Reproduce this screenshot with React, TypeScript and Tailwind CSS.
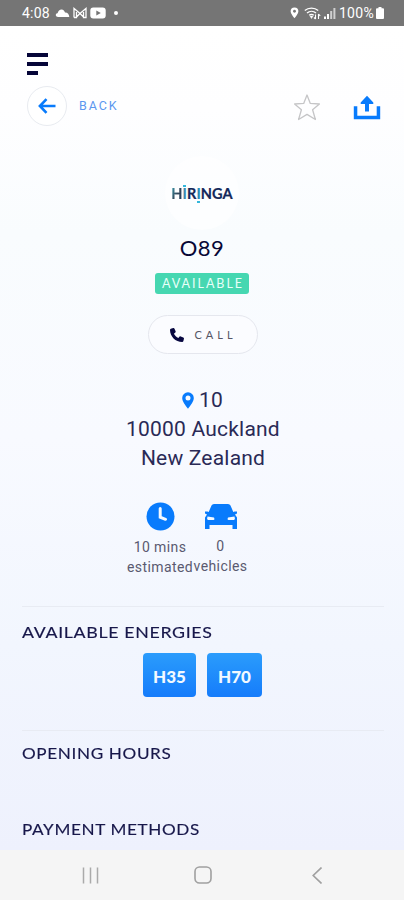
import React from "react";

function StatusBar() {
  return (
    <header className="flex h-[26px] shrink-0 items-center bg-[#757575] pl-[22px] pr-[20px] font-['Roboto',sans-serif] text-white">
      <span className="w-[33px] text-[14px] leading-[26px] tracking-[0.2px]">4:08</span>
      <svg className="h-[10px] w-[15px]" viewBox="0 0 15 10" fill="#fff">
        <path d="M3.2 9C1.4 9 .6 8 .8 6.8 1 5.700 2 5.300 2.600 5.300 3 2.500 5 1.300 6.600 1.400 8.400 1.500 9.600 2.800 10 4.500 12.500 4.300 14.200 6.200 14.300 9Z" />
      </svg>
      <svg className="ml-[3px] h-[12px] w-[14px]" viewBox="0 0 14 12" fill="none" stroke="#fff" strokeWidth="1.300">
        <path d="M1 10.500V1.500L7 6.500 13 1.500V10.500H10.500V5M3.500 5V10.500H1M3.500 10 7 6.500 10.500 10" />
      </svg>
      <svg className="ml-[3px] h-[12px] w-[16px]" viewBox="0 0 16 12">
        <rect x="0.300" y="0.500" width="15.400" height="11" rx="3" fill="#fff" />
        <path d="M6.300 3.500 10.800 6 6.300 8.500Z" fill="#757575" />
      </svg>
      <span className="ml-[8px] h-[4px] w-[4px] rounded-full bg-white" />
      <div className="ml-auto flex items-center">
        <svg className="h-[12px] w-[9px]" viewBox="0 0 9 13">
          <path d="M4.500 .5A4.200 4.200 0 0 0 .3 4.700C.3 7.500 4.500 12.300 4.500 12.300S8.700 7.500 8.700 4.700A4.200 4.200 0 0 0 4.500 .5Z" fill="#fff" />
          <circle cx="4.500" cy="4.600" r="1.500" fill="#757575" />
        </svg>
        <svg className="ml-[5px] h-[13px] w-[17px]" viewBox="0 0 17 13" fill="none" stroke="#fff" strokeWidth="1.300">
          <path d="M.8 3.600C4.500 .3 10.500 .3 14.200 3.600M3 6C5.600 3.700 9.400 3.700 12 6M5.200 8.300C6.600 7.200 8.300 7.200 9.800 8.300" />
          <path d="M6 9H9L7.500 11.500Z" fill="#fff" strokeWidth="0.500" />
          <path d="M11.500 12V7.500M10 10.500 11.500 12M14.500 7V12M14.500 7 16.200 8.900" strokeWidth="1.100" />
        </svg>
        <svg className="ml-[3px] h-[11px] w-[12px]" viewBox="0 0 12 11" fill="#fff">
          <path d="M0 8.500H2V11H0ZM3 6H5V11H3Z" />
          <path d="M6.200 3H8.200V11H6.200ZM9.400 0H11.400V11H9.400Z" opacity="0.650" />
        </svg>
        <span className="ml-[3px] text-[14px] leading-[26px] tracking-[0.300px]">100%</span>
        <svg className="ml-[2px] h-[12px] w-[8px]" viewBox="0 0 8 12" fill="#fff">
          <path d="M2.500 0H5.500V1.200H7Q8 1.200 8 2.200V11Q8 12 7 12H1Q0 12 0 11V2.200Q0 1.200 1 1.200H2.500Z" />
        </svg>
      </div>
    </header>
  );
}

function Toolbar() {
  return (
    <div className="pt-[27px]">
      <div className="ml-[27px] flex h-[33px] flex-col gap-[5px]">
        <span className="h-[4px] w-[21px] bg-[#050538]" />
        <span className="h-[4px] w-[21px] bg-[#050538]" />
        <span className="h-[4px] w-[11px] bg-[#050538]" />
      </div>
      <div className="flex h-[40px] items-center pl-[27px] pr-[23px]">
        <button className="flex h-[40px] w-[40px] items-center justify-center rounded-full border border-[#e8ebf0] bg-white">
          <svg className="h-[16px] w-[18px]" viewBox="0 0 18 16" fill="none" stroke="#087bfc" strokeWidth="2.600">
            <path d="M17.500 8H2M8.500 1.200 1.900 8 8.500 14.800" />
          </svg>
        </button>
        <span className="ml-[12px] font-['Roboto',sans-serif] text-[12.500px] tracking-[1.900px] text-[#5b97ef]">BACK</span>
        <svg className="mt-[1px] ml-auto h-[28px] w-[28px]" viewBox="0 0 28 28" fill="none" stroke="#c5c5c7" strokeWidth="1.300" strokeLinejoin="round">
          <path d="M14 2 17.300 10.400 26.400 11 19.600 16.800 22.400 26.500 14 21.400 5.600 26.500 8.400 16.800 1.600 11 10.700 10.400Z" />
        </svg>
        <svg className="mt-[2px] ml-[32px] h-[25px] w-[28px]" viewBox="0 0 28 25" fill="#087bfc">
          <path d="M.8 11.300H4.300V20.700H23.700V11.300H27.200V24.200H.8Z" />
          <path d="M14 .7 20.300 7.500V9H16V16.500H12V9H7.700V7.500Z" />
        </svg>
      </div>
    </div>
  );
}

function BrandLogo() {
  return (
    <div className="mt-[30px] flex h-[74px] w-[74px] items-center justify-center self-center rounded-full bg-white/60">
      <div className="relative mt-[2px] flex font-['Lato',sans-serif] text-[14.500px] leading-[20px] font-bold tracking-[0.100px] whitespace-nowrap text-[#13285a] [-webkit-text-stroke:0.200px]">
        <span className="bg-[linear-gradient(120deg,#3faec0,#33475b_50%,#133456)] bg-clip-text text-transparent">H</span>
        <span className="text-[#3689ae]">I</span>
        <span>R</span>
        <span className="text-[#218bb5]">I</span>
        <span>NGA</span>
        <i className="absolute top-[1px] left-[12px] h-[2px] w-[3px] bg-[#35b7db]" />
        <i className="absolute top-[17px] left-[26px] h-[2px] w-[3px] bg-[#35b7db]" />
      </div>
    </div>
  );
}

function Summary() {
  return (
    <section className="flex flex-col items-center">
      <h1 className="mt-[2px] h-[41px] font-['Lato',sans-serif] text-[22px] leading-[32px] tracking-[0.500px] text-[#080836]">O89</h1>
      <span className="flex h-[21px] w-[94px] items-center justify-center rounded-[3px] bg-[#46d7b1] pt-[1px] pl-[2px] font-['Lato',sans-serif] text-[12.500px] tracking-[2px] text-[#e9fff9]">AVAILABLE</span>
      <button className="mt-[21px] ml-[1px] flex h-[39px] w-[110px] items-center rounded-full border border-[#e5e7ee] bg-[#fbfcff] pl-[21px]">
        <svg className="h-[14px] w-[14px]" viewBox="0 0 512 512" fill="#080840">
          <path d="M164.900 24.600c-7.700-18.600-28-28.500-47.400-23.200l-88 24C12.100 30.200 0 46 0 64c0 247.400 200.600 448 448 448 18 0 33.800-12.100 38.600-29.500l24-88c5.300-19.400-4.600-39.700-23.200-47.400l-96-40c-16.300-6.800-35.200-2.100-46.300 11.600L304.700 368C234.300 334.700 177.300 277.700 144 207.300L193.300 167c13.700-11.200 18.400-30 11.600-46.300l-40-96z" />
        </svg>
        <span className="ml-[11px] pt-[1px] font-['Lato',sans-serif] text-[11px] tracking-[4px] text-[#555565]">CALL</span>
      </button>
    </section>
  );
}

function Address() {
  return (
    <address className="mt-[32px] flex h-[87px] flex-col items-center font-['Roboto',sans-serif] text-[21px] leading-[29px] tracking-[0.200px] not-italic text-[#2a2a56]">
      <div className="ml-[1px] flex items-center">
        <svg className="mr-[5px] h-[17px] w-[12px]" viewBox="0 0 12 17" fill="#087bfc" fillRule="evenodd">
          <path d="M6 .2A5.800 5.800 0 0 0 .2 6C.2 9.500 3.500 13.500 6 16.800 8.500 13.500 11.800 9.500 11.800 6A5.800 5.800 0 0 0 6 .2ZM6 3.400A2.500 2.500 0 1 1 6 8.400 2.500 2.500 0 0 1 6 3.400Z" />
        </svg>
        10
      </div>
      <div className="ml-[2px]">10000 Auckland</div>
      <div className="ml-[2px]">New Zealand</div>
    </address>
  );
}

function Stats() {
  return (
    <section className="mt-[29px] flex h-[104px] pl-[126px] font-['Roboto',sans-serif] text-[14px] leading-[20px] tracking-[0.400px] text-[#5a5a70]">
      <div className="flex w-[68px] flex-col items-center">
        <svg className="h-[29px] w-[29px]" viewBox="0 0 29 29">
          <circle cx="14.500" cy="14.500" r="14" fill="#087bfc" />
          <path d="M14.200 6.500V15.200L19.500 17.300" stroke="#f4f9ff" strokeWidth="3" strokeLinecap="round" fill="none" />
        </svg>
        <p className="mt-[6px] whitespace-nowrap">10 mins</p>
        <p className="whitespace-nowrap">estimated</p>
      </div>
      <div className="flex w-[53px] flex-col items-center">
        <svg className="mt-[1px] h-[27px] w-[34px] shrink-0" viewBox="0 0 34 27">
          <path d="M7.500 2.500Q8.200 1 10 1H24Q25.800 1 26.500 2.500L29.300 9 30.500 8.500H33V10.500L31 11.500 33 14.500V26H28.500V22H5.500V26H1V14.500L3 11.500 1 10.500V8.500H3.500L4.700 9Z" fill="#087bfc" />
          <path d="M3.500 13.500 10 14.500Q11 17 9.500 17H4Q2.500 16 3.500 13.500ZM30.500 13.500 24 14.500Q23 17 24.500 17H30Q31.500 16 30.500 13.500Z" fill="#f4f9ff" />
        </svg>
        <p className="mt-[6px]">0</p>
        <p className="whitespace-nowrap">vehicles</p>
      </div>
    </section>
  );
}

function SectionTitle({ stretch = "scale-x-[1.07]", children }: { stretch?: string; children: React.ReactNode }) {
  return (
    <h2 className={"h-[24px] origin-left font-['Lato',sans-serif] text-[16px] leading-[24px] tracking-[0.600px] whitespace-nowrap text-[#17174a] [-webkit-text-stroke:0.150px] " + stretch}>
      {children}
    </h2>
  );
}

function Energies() {
  const chip = "flex h-[44px] items-center justify-center rounded-[4px] bg-linear-to-b from-[#2b9cfc] to-[#167cfb] pt-[3px] font-['Lato',sans-serif] text-[17px] font-black text-[#f2f9ff]";
  return (
    <div className="mt-[9px] ml-[121px] flex gap-[11px]">
      <span className={chip + " w-[53px]"}>H35</span>
      <span className={chip + " w-[55px]"}>H70</span>
    </div>
  );
}

function NavigationBar() {
  return (
    <nav className="flex h-[50px] shrink-0 items-center justify-between bg-[#f5f5f5] px-[82px]">
      <svg className="h-[17px] w-[17px]" viewBox="0 0 17 17" stroke="#aaa" strokeWidth="1.500">
        <path d="M1.500 .5V16.500M8.500 .5V16.500M15.500 .5V16.500" />
      </svg>
      <svg className="mr-[5px] h-[18px] w-[18px]" viewBox="0 0 18 18" fill="none" stroke="#a0a0a0" strokeWidth="1.600">
        <rect x="1" y="1" width="16" height="16" rx="4.500" />
      </svg>
      <svg className="h-[17px] w-[10px]" viewBox="0 0 10 17" fill="none" stroke="#a0a0a0" strokeWidth="1.600">
        <path d="M9.500 .5 1.200 8.500 9.500 16.500" />
      </svg>
    </nav>
  );
}

export default function App() {
  return (
    <div className="flex h-[900px] w-[404px] flex-col overflow-hidden">
      <StatusBar />
      <main className="flex min-h-0 flex-1 flex-col bg-[linear-gradient(180deg,#ffffff_0%,#fefeff_10%,#f9fcfe_25%,#f8faff_50%,#f2f6fe_75%,#eef1fd_100%)]">
        <Toolbar />
        <BrandLogo />
        <Summary />
        <Address />
        <Stats />
        <div className="mr-[20px] ml-[22px] flex flex-col">
          <hr className="border-[#e8ebf3]" />
          <div className="mt-[13px] w-fit"><SectionTitle stretch="scale-x-[1.11]">AVAILABLE ENERGIES</SectionTitle></div>
          <Energies />
          <hr className="mt-[33px] border-[#e8ebf3]" />
          <div className="mt-[10px] w-fit"><SectionTitle>OPENING HOURS</SectionTitle></div>
          <div className="mt-[52px] w-fit"><SectionTitle>PAYMENT METHODS</SectionTitle></div>
        </div>
      </main>
      <NavigationBar />
    </div>
  );
}
